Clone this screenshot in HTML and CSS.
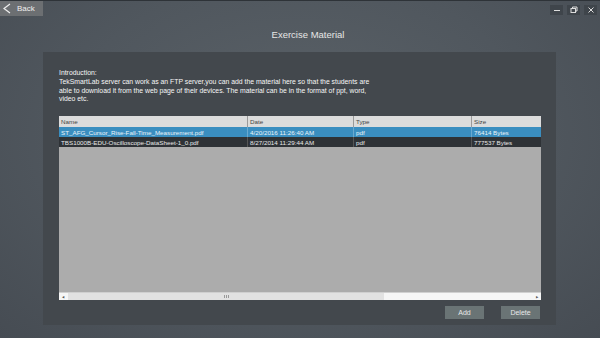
FILE: index.html
```html
<!DOCTYPE html>
<html lang="en">
<head>
  <meta charset="UTF-8" />
  <title>Exercise Material</title>
  <link rel="stylesheet" href="styles.css">
</head>
<body>

<div class="topbar">
  <div class="back">
    <svg width="11" height="11" viewBox="0 0 11 11"><path d="M8 1 L2 5.5 L8 10" fill="none" stroke="#eee" stroke-width="1.2"/></svg>
    <span>Back</span>
  </div>
  <div class="winbtns">
    <div class="winbtn"><svg width="8" height="8" viewBox="0 0 8 8"><path d="M1 4.5 H7" stroke="#ddd" stroke-width="1"/></svg></div>
    <div class="winbtn"><svg width="8" height="8" viewBox="0 0 8 8"><rect x="1" y="2.5" width="4.5" height="4" fill="none" stroke="#ddd" stroke-width="1"/><path d="M2.5 2.5 V1 H7 V5 H5.5" fill="none" stroke="#ddd" stroke-width="1"/></svg></div>
    <div class="winbtn"><svg width="8" height="8" viewBox="0 0 8 8"><path d="M1.5 1.5 L6.5 6.5 M6.5 1.5 L1.5 6.5" stroke="#ddd" stroke-width="1"/></svg></div>
  </div>
</div>

<h1 class="title">Exercise Material</h1>

<div class="panel">
  <div class="intro">
    Introduction:<br>
    TekSmartLab server can work as an FTP server,you can add the material here so that the students are<br>
    able to download it from the web page of their devices. The material can be in the format of ppt, word,<br>
    video etc.
  </div>

  <div class="grid">
    <div class="row head">
      <div class="c name">Name</div><div class="c date">Date</div><div class="c type">Type</div><div class="c size">Size</div>
    </div>
    <div class="row sel">
      <div class="c name">ST_AFG_Cursor_Rise-Fall-Time_Measurement.pdf</div><div class="c date">4/20/2016 11:26:40 AM</div><div class="c type">pdf</div><div class="c size">76414 Bytes</div>
    </div>
    <div class="row dark">
      <div class="c name">TBS1000B-EDU-Oscilloscope-DataSheet-1_0.pdf</div><div class="c date">8/27/2014 11:29:44 AM</div><div class="c type">pdf</div><div class="c size">777537 Bytes</div>
    </div>
    <div class="empty"></div>
    <div class="hscroll">
      <div class="arrow">&#9664;</div>
      <div class="track"><div class="thumb"><span class="grip"></span></div></div>
      <div class="arrow">&#9654;</div>
    </div>
  </div>

  <div class="actions">
    <button class="btn">Add</button>
    <button class="btn">Delete</button>
  </div>
</div>

</body>
</html>
```

FILE: styles.css
```css
* {
  margin: 0;
  padding: 0;
  box-sizing: border-box;
}

body {
  width: 600px;
  height: 338px;
  overflow: hidden;
  font-family: 'Liberation Sans', Arial, sans-serif;
  background: radial-gradient(ellipse at 50% 40%, #5b6268 0%, #50575e 55%, #464c53 100%);
  color: #eee;
  border-top: 1px solid #2e3338;
}

.topbar {
  display: flex;
  justify-content: space-between;
  height: 15px;
}

.back {
  width: 43px;
  height: 15px;
  background-color: #6c6f72;
  display: flex;
  align-items: center;
  gap: 4px;
  padding-left: 2px;
  font-size: 8px;
  color: #eee;
}

.winbtns {
  display: flex;
  gap: 4px;
  padding: 4px 3px 0 0;
}

.winbtn {
  width: 13px;
  height: 10px;
  background-color: #3f454b;
  display: flex;
  align-items: center;
  justify-content: center;
}

.title {
  font-size: 9.5px;
  font-weight: normal;
  text-align: center;
  color: #e6e6e6;
  margin-top: 13px;
  padding-left: 16px;
  height: 23px;
}

.panel {
  margin-left: 43px;
  width: 513px;
  height: 273px;
  background-color: #43484d;
  padding: 17px 15px 0 16px;
  display: flex;
  flex-direction: column;
}

.intro {
  font-size: 6.85px;
  line-height: 8.8px;
  color: #f6f6f6;
  height: 47px;
}

.grid {
  width: 482px;
  height: 184px;
  background-color: #acacac;
  display: flex;
  flex-direction: column;
  font-size: 6.25px;
}

.row {
  display: flex;
  height: 10px;
  align-items: center;
}

.row.head {
  background-color: #dcdcdc;
  color: #444;
  height: 11px;
}

.row.sel {
  background-color: #3a8ec0;
  color: #eaf4fa;
}

.row.dark {
  background-color: #2e3236;
  color: #e8e8e8;
}

.c {
  padding-left: 2px;
  height: 100%;
  display: flex;
  align-items: center;
  white-space: nowrap;
  overflow: hidden;
  border-right: 1px solid #9a9a9a;
}

.row.dark .c { border-right-color: #555; }
.row.sel .c { border-right-color: #6aa9d0; }

.name { width: 189px; }
.date { width: 106px; }
.type { width: 118px; }
.size { width: 69px; border-right: none; }

.empty {
  flex: 1;
}

.hscroll {
  height: 8px;
  display: flex;
  background-color: #f6f6f6;
  border-top: 1px solid #d0d0d0;
}

.arrow {
  width: 8px;
  font-size: 3px;
  color: #555;
  display: flex;
  align-items: center;
  justify-content: center;
}

.track {
  flex: 1;
  display: flex;
}

.thumb {
  width: 316px;
  margin-left: 1px;
  background-color: #e2e2e2;
  display: flex;
  align-items: center;
  justify-content: center;
}

.grip {
  width: 5px;
  height: 3px;
  border-left: 1px solid #999;
  border-right: 1px solid #999;
  background: linear-gradient(to right, transparent 1px, #999 1px, #999 2px, transparent 2px);
}

.actions {
  display: flex;
  justify-content: flex-end;
  gap: 17px;
  margin-top: 6px;
  padding-right: 1px;
}

.btn {
  width: 39px;
  height: 13px;
  background-color: #6a7475;
  color: #e8e8e8;
  border: none;
  font-family: 'Liberation Sans', Arial, sans-serif;
  font-size: 7px;
}
```
